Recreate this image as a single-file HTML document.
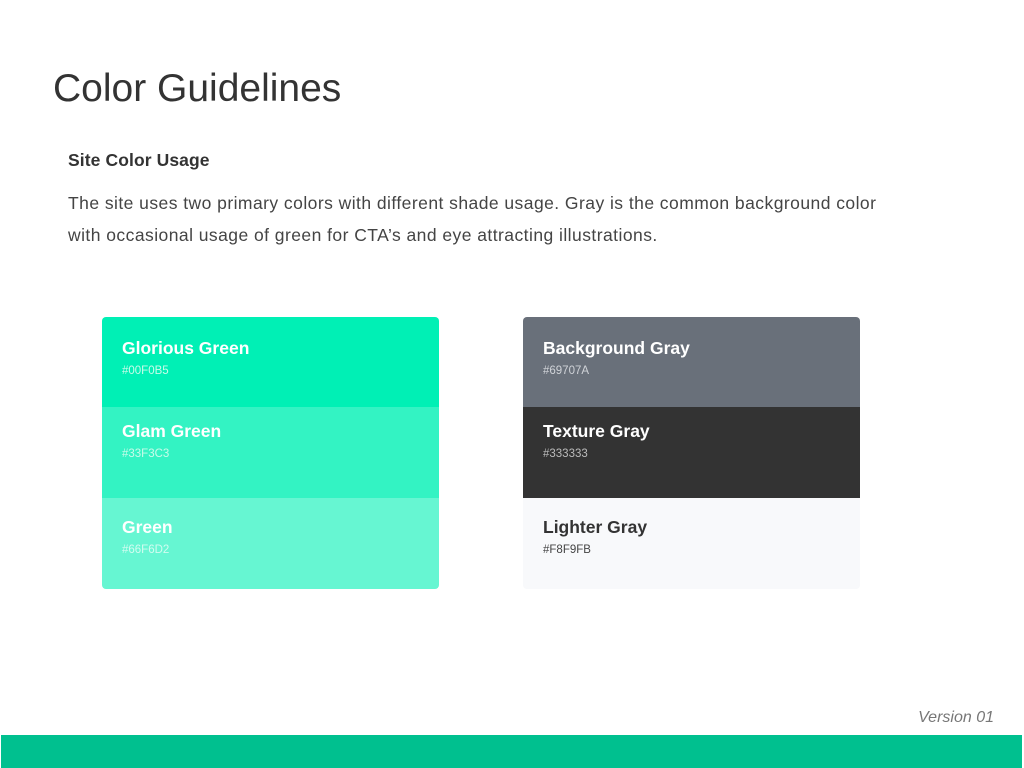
<!DOCTYPE html>
<html><head><style>
*{margin:0;padding:0;box-sizing:border-box}
body{width:1024px;height:768px;background:#fff;font-family:"Liberation Sans",sans-serif;position:relative;overflow:hidden;color:#333}
h1{position:absolute;left:53px;top:67px;font-size:39px;font-weight:400;color:#333}
h2{position:absolute;left:68px;top:150px;font-size:17.5px;font-weight:700;color:#333;letter-spacing:0.1px}
p{position:absolute;left:68px;top:187px;font-size:17.5px;line-height:32px;color:#444;width:900px;letter-spacing:0.45px}
.card{position:absolute;top:317px;width:337px;height:272px;border-radius:4px;overflow:hidden}
.row{position:absolute;left:0;width:100%}
.t{position:absolute;left:20px;font-size:17.5px;font-weight:700}
.h{position:absolute;left:20px;font-size:11.5px}
.bar{position:absolute;left:1px;top:735px;width:1021px;height:33px;background:#00c08f}
.ver{position:absolute;right:30px;top:709px;font-size:16px;font-style:italic;color:#777}
</style></head><body>
<h1>Color Guidelines</h1>
<h2>Site Color Usage</h2>
<p>The site uses two primary colors with different shade usage. Gray is the common background color<br>with occasional usage of green for CTA’s and eye attracting illustrations.</p>
<div class="card" style="left:102px">
 <div class="row" style="top:0;height:90px;background:#00f0b5"><div class="t" style="top:21px;color:#fff">Glorious Green</div><div class="h" style="top:48px;color:#c8fbe9">#00F0B5</div></div>
 <div class="row" style="top:90px;height:91px;background:#33f3c3"><div class="t" style="top:14px;color:#fff">Glam Green</div><div class="h" style="top:41px;color:#c8fbe9">#33F3C3</div></div>
 <div class="row" style="top:181px;height:91px;background:#66f6d2"><div class="t" style="top:19px;color:#fff">Green</div><div class="h" style="top:46px;color:#d2fcf0">#66F6D2</div></div>
</div>
<div class="card" style="left:523px">
 <div class="row" style="top:0;height:90px;background:#69707a"><div class="t" style="top:21px;color:#fff">Background Gray</div><div class="h" style="top:48px;color:#d0d3d8">#69707A</div></div>
 <div class="row" style="top:90px;height:91px;background:#333"><div class="t" style="top:14px;color:#fff">Texture Gray</div><div class="h" style="top:41px;color:#bbb">#333333</div></div>
 <div class="row" style="top:181px;height:91px;background:#f8f9fb"><div class="t" style="top:19px;color:#333">Lighter Gray</div><div class="h" style="top:46px;color:#444">#F8F9FB</div></div>
</div>
<div class="ver">Version 01</div>
<div class="bar"></div>
</body></html>
